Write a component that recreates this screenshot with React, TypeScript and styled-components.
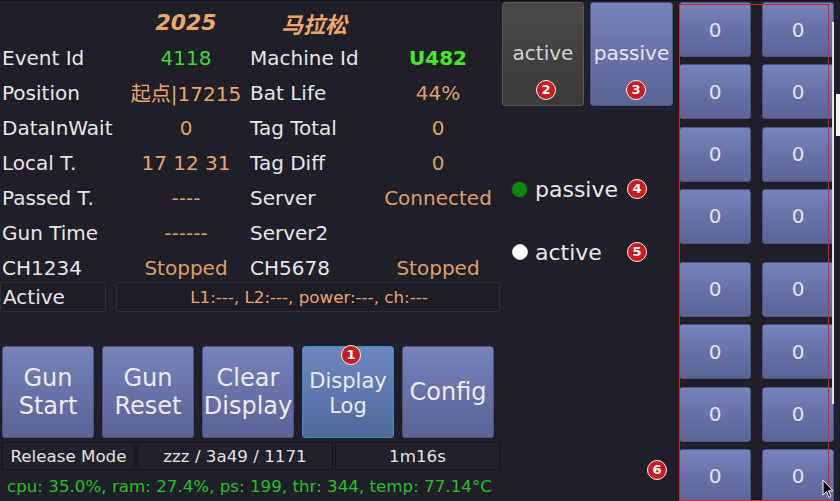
import React from "react";
import styled, { createGlobalStyle, css } from "styled-components";

const GlobalStyle = createGlobalStyle`
  html, body { margin: 0; padding: 0; background: #1f1e29; }
  body { font-family: "DejaVu Sans", "Noto Sans CJK SC", sans-serif; }
  * { box-sizing: border-box; }
`;

const ORANGE = "#eba66a";
const ORANGE_DIM = "#dba067";
const GREEN = "#3fd83a";

const Screen = styled.div`
  position: relative;
  width: 840px;
  height: 501px;
  overflow: hidden;
  background: #1f1e29;
  display: flex;
  color: #e6e6e8;
  border-top: 1px solid #121118;
`;

const LeftPanel = styled.div`
  width: 500px;
  display: flex;
  flex-direction: column;
`;

const InfoGrid = styled.div`
  display: grid;
  grid-template-columns: 128px 116px 132px 124px;
  grid-auto-rows: 35px;
  padding-top: 4px;
`;

const Cell = styled.div<{ $align?: "left" | "center"; $pad?: number }>`
  display: flex;
  align-items: center;
  justify-content: ${(p) => (p.$align === "center" ? "center" : "flex-start")};
  padding-left: ${(p) => p.$pad ?? 0}px;
  font-size: 20px;
  white-space: nowrap;
  color: #e6e6e8;
`;

const Value = styled.span<{ $tone?: "orange" | "dim" | "green"; $bold?: boolean }>`
  color: ${(p) => (p.$tone === "green" ? GREEN : p.$tone === "dim" ? ORANGE_DIM : ORANGE)};
  font-weight: ${(p) => (p.$bold ? 700 : 400)};
  ${(p) =>
    p.$bold &&
    css`
      color: #44ea22;
    `}
`;

const Heading = styled.span`
  color: ${ORANGE};
  font-weight: 700;
  font-style: italic;
  font-size: 22px;
`;

const StatusRow = styled.div`
  display: flex;
  height: 30px;
  margin-top: -3px;
  gap: 10px;
`;

const StatusBox = styled.div<{ $grow?: boolean }>`
  display: flex;
  align-items: center;
  justify-content: ${(p) => (p.$grow ? "center" : "flex-start")};
  ${(p) => (p.$grow ? "flex: 1;" : "width: 106px;")}
  padding-left: 2px;
  border: 1px solid #2f2e3a;
  border-radius: 2px;
  background: #1d1c27;
  font-size: ${(p) => (p.$grow ? 16.7 : 20)}px;
  color: ${(p) => (p.$grow ? ORANGE : "#e6e6e8")};
`;

const ButtonRow = styled.div`
  display: flex;
  gap: 8px;
  padding-left: 2px;
  margin-top: 34px;
  height: 92px;
`;

const blueFace = css`
  background: linear-gradient(to bottom, #7783bb 0%, #6670a6 55%, #5a6495 100%);
  border: 1px solid #4b5485;
`;

const ActionButton = styled.div<{ $focused?: boolean; $small?: boolean }>`
  position: relative;
  width: 92px;
  height: 92px;
  border-radius: 3px;
  ${blueFace}
  ${(p) =>
    p.$focused &&
    css`
      background: linear-gradient(to bottom, #6d85bd 0%, #5f77ad 55%, #516898 100%);
      border: 1px solid #3c8fc4;
    `}
  display: flex;
  flex-direction: column;
  align-items: center;
  justify-content: center;
  color: #ececf2;
  font-size: ${(p) => (p.$small ? 21 : 24)}px;
  line-height: ${(p) => (p.$small ? 25 : 28)}px;
  padding-top: ${(p) => (p.$small ? 3 : 0)}px;
  text-align: center;
`;

const InfoBar = styled.div`
  display: flex;
  height: 28px;
  margin-top: 4px;
  padding-left: 2px;
  gap: 2px;
`;

const InfoBox = styled.div<{ $w: number }>`
  width: ${(p) => p.$w}px;
  display: flex;
  align-items: center;
  justify-content: center;
  background: #21202b;
  border: 1px solid #15141c;
  font-size: 16.7px;
  color: #e2e2e2;
  white-space: nowrap;
`;

const StatsLine = styled.div`
  height: 31px;
  display: flex;
  align-items: center;
  padding-left: 7px;
  color: #22c21f;
  font-size: 16.7px;
  white-space: nowrap;
`;

const MiddlePanel = styled.div`
  position: relative;
  width: 177px;
  margin-left: 2px;
  display: flex;
  flex-direction: column;
`;

const ModeRow = styled.div`
  display: flex;
  gap: 6px;
  padding-top: 1px;
`;

const ModeButton = styled.div<{ $variant: "gray" | "blue" }>`
  position: relative;
  width: ${(p) => (p.$variant === "gray" ? 82 : 83)}px;
  height: 104px;
  border-radius: 3px;
  display: flex;
  align-items: center;
  justify-content: center;
  padding-bottom: 2px;
  font-size: 20px;
  ${(p) =>
    p.$variant === "gray"
      ? css`
          background: linear-gradient(to bottom, #484848, #3b3b3b);
          border: 1px solid #575757;
          color: #d4d4d4;
        `
      : css`
          ${blueFace}
          color: #e6e6ee;
        `}
`;

const RadioList = styled.div`
  display: flex;
  flex-direction: column;
  gap: 33px;
  margin-top: 68px;
  padding-left: 9px;
`;

const RadioItem = styled.div`
  position: relative;
  height: 30px;
  display: flex;
  align-items: center;
  gap: 7px;
  font-size: 22px;
  color: #e8e8ec;
`;

const RadioDot = styled.span<{ $on?: boolean }>`
  flex-shrink: 0;
  width: ${(p) => (p.$on ? 17 : 16)}px;
  height: ${(p) => (p.$on ? 17 : 16)}px;
  margin-left: ${(p) => (p.$on ? 0 : 1)}px;
  border-radius: 50%;
  background: ${(p) => (p.$on ? "#0f870f" : "#ffffff")};
  border: 1px solid ${(p) => (p.$on ? "#093a09" : "#d8d8d8")};
`;

const Badge = styled.span<{ $x: number; $y: number }>`
  position: absolute;
  left: ${(p) => p.$x - 10}px;
  top: ${(p) => p.$y - 10}px;
  width: 20px;
  height: 20px;
  border-radius: 50%;
  background: #c81c1f;
  border: 1.5px solid #f4f4f4;
  color: #ffffff;
  font-family: "DejaVu Sans", sans-serif;
  font-weight: 700;
  font-size: 13px;
  line-height: 17px;
  text-align: center;
  z-index: 3;
`;

const GridPanel = styled.div`
  width: 155px;
  display: flex;
  flex-direction: column;
  gap: 18px;
  padding-top: 1px;
`;

const KeyGroup = styled.div`
  display: grid;
  grid-template-columns: 72px 72px;
  grid-auto-rows: 55px;
  column-gap: 11px;
  row-gap: 7.33px;
`;

const KeyButton = styled.div`
  ${blueFace}
  border-radius: 3px;
  display: flex;
  align-items: center;
  justify-content: center;
  font-size: 20px;
  color: #e2e4ee;
`;

const Outline = styled.div`
  position: absolute;
  left: 679px;
  top: 3px;
  width: 150px;
  height: 497px;
  border: 1px solid #e0201e;
  pointer-events: none;
  z-index: 4;
`;

const ScrollTrack = styled.div`
  position: absolute;
  left: 832px;
  top: 21px;
  width: 2px;
  height: 382px;
  background: #e6e6e6;
  z-index: 4;
`;

const ScrollThumb = styled.div`
  position: absolute;
  left: 836px;
  top: 93px;
  width: 4px;
  height: 42px;
  background: #f2f2f2;
  z-index: 4;
`;

const Cursor = styled.svg`
  position: absolute;
  left: 822px;
  top: 478px;
  z-index: 5;
`;

type Row = [string, React.ReactNode, string, React.ReactNode];

const rows: Row[] = [
  ["Event Id", <Value $tone="green">4118</Value>, "Machine Id", <Value $tone="green" $bold>U482</Value>],
  ["Position", <Value>起点|17215</Value>, "Bat Life", <Value $tone="dim">44%</Value>],
  ["DataInWait", <Value $tone="dim">0</Value>, "Tag Total", <Value $tone="dim">0</Value>],
  ["Local T.", <Value>17 12 31</Value>, "Tag Diff", <Value $tone="dim">0</Value>],
  ["Passed T.", <Value $tone="dim">----</Value>, "Server", <Value $tone="dim">Connected</Value>],
  ["Gun Time", <Value $tone="dim">------</Value>, "Server2", ""],
  ["CH1234", <Value $tone="dim">Stopped</Value>, "CH5678", <Value $tone="dim">Stopped</Value>],
];

const actions: { lines: string[]; focused?: boolean; small?: boolean; badge?: number }[] = [
  { lines: ["Gun", "Start"] },
  { lines: ["Gun", "Reset"] },
  { lines: ["Clear", "Display"] },
  { lines: ["Display", "Log"], focused: true, small: true, badge: 1 },
  { lines: ["Config"] },
];

export default function App() {
  return (
    <>
      <GlobalStyle />
      <Screen>
        <LeftPanel>
          <InfoGrid>
            <Cell />
            <Cell $align="center">
              <Heading>2025</Heading>
            </Cell>
            <Cell $align="center" $pad={8}>
              <Heading>马拉松</Heading>
            </Cell>
            <Cell />
            {rows.map((r, i) => (
              <React.Fragment key={i}>
                <Cell $pad={2}>{r[0]}</Cell>
                <Cell $align="center">{r[1]}</Cell>
                <Cell $pad={6}>{r[2]}</Cell>
                <Cell $align="center">{r[3]}</Cell>
              </React.Fragment>
            ))}
          </InfoGrid>
          <StatusRow>
            <StatusBox>Active</StatusBox>
            <StatusBox $grow>L1:---, L2:---, power:---, ch:---</StatusBox>
          </StatusRow>
          <ButtonRow>
            {actions.map((a, i) => (
              <ActionButton key={i} $focused={a.focused} $small={a.small}>
                {a.lines.map((l) => (
                  <span key={l}>{l}</span>
                ))}
                {a.badge && (
                  <Badge $x={48} $y={8}>
                    {a.badge}
                  </Badge>
                )}
              </ActionButton>
            ))}
          </ButtonRow>
          <InfoBar>
            <InfoBox $w={133}>Release Mode</InfoBox>
            <InfoBox $w={196}>zzz / 3a49 / 1171</InfoBox>
            <InfoBox $w={165}>1m16s</InfoBox>
          </InfoBar>
          <StatsLine>cpu: 35.0%, ram: 27.4%, ps: 199, thr: 344, temp: 77.14°C</StatsLine>
        </LeftPanel>

        <MiddlePanel>
          <ModeRow>
            <ModeButton $variant="gray">
              active
              <Badge $x={43} $y={87}>2</Badge>
            </ModeButton>
            <ModeButton $variant="blue">
              passive
              <Badge $x={45} $y={87}>3</Badge>
            </ModeButton>
          </ModeRow>
          <RadioList>
            <RadioItem>
              <RadioDot $on />
              passive
              <Badge $x={126} $y={15}>4</Badge>
            </RadioItem>
            <RadioItem>
              <RadioDot />
              active
              <Badge $x={126} $y={15}>5</Badge>
            </RadioItem>
          </RadioList>
          <Badge $x={155} $y={469}>6</Badge>
        </MiddlePanel>

        <GridPanel>
          {[0, 1].map((g) => (
            <KeyGroup key={g}>
              {Array.from({ length: 8 }).map((_, i) => (
                <KeyButton key={i}>0</KeyButton>
              ))}
            </KeyGroup>
          ))}
        </GridPanel>

        <Outline />
        <ScrollTrack />
        <ScrollThumb />
        <Cursor width="12" height="20" viewBox="0 0 12 20">
          <path d="M1 1 L1 16 L4.5 12.5 L7 18.5 L9 17.6 L6.6 11.8 L11 11.8 Z" fill="#000" stroke="#fff" strokeWidth="1" />
        </Cursor>
      </Screen>
    </>
  );
}
